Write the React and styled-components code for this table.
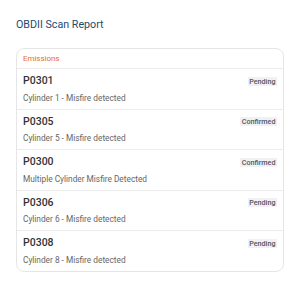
import React from 'react';
import styled, { createGlobalStyle } from 'styled-components';

const GlobalStyle = createGlobalStyle`
  html, body {
    margin: 0;
    padding: 0;
    background: #fff;
  }
  body {
    font-family: Roboto, 'Liberation Sans', sans-serif;
  }
`;

const Page = styled.div`
  padding: 16px;
  width: 300px;
  box-sizing: border-box;
`;

const Title = styled.h1`
  margin: 0 0 16px;
  padding-top: 1px;
  font-size: 10.7px;
  line-height: 15px;
  font-weight: 400;
  color: #1d4a6e;
`;

const Card = styled.section`
  border: 1px solid #e6e6e6;
  border-radius: 8px;
  background: #fff;
  overflow: hidden;
`;

const CardHeader = styled.div`
  padding: 4px 6px 4px;
  font-size: 7.9px;
  line-height: 11px;
  color: #e76a2c;
  border-bottom: 1px solid #ececec;
`;

const Row = styled.div`
  padding: 4px 6px 5px;
  border-bottom: 1px solid #ececec;
  &:last-child {
    border-bottom: none;
  }
`;

const RowTop = styled.div`
  display: flex;
  justify-content: space-between;
  align-items: center;
`;

const Code = styled.span`
  font-size: 10.5px;
  line-height: 16px;
  font-weight: 500;
  color: #333;
`;

const Badge = styled.span`
  font-size: 7.2px;
  line-height: 9px;
  font-weight: 500;
  padding: 0 1.5px;
  color: #555;
  background: #f1f1f5;
`;

const Desc = styled.div`
  margin-top: 2.5px;
  font-size: 8.3px;
  line-height: 12px;
  color: #666;
`;

const codes = [
  { code: 'P0301', desc: 'Cylinder 1 - Misfire detected', status: 'Pending' },
  { code: 'P0305', desc: 'Cylinder 5 - Misfire detected', status: 'Confirmed' },
  { code: 'P0300', desc: 'Multiple Cylinder Misfire Detected', status: 'Confirmed' },
  { code: 'P0306', desc: 'Cylinder 6 - Misfire detected', status: 'Pending' },
  { code: 'P0308', desc: 'Cylinder 8 - Misfire detected', status: 'Pending' },
];

const App = () => {
  return (
    <Page>
      <GlobalStyle />
      <Title>OBDII Scan Report</Title>
      <Card>
        <CardHeader>Emissions</CardHeader>
        {codes.map(({ code, desc, status }) => (
          <Row key={code}>
            <RowTop>
              <Code>{code}</Code>
              <Badge>{status}</Badge>
            </RowTop>
            <Desc>{desc}</Desc>
          </Row>
        ))}
      </Card>
    </Page>
  );
};

export default App;
